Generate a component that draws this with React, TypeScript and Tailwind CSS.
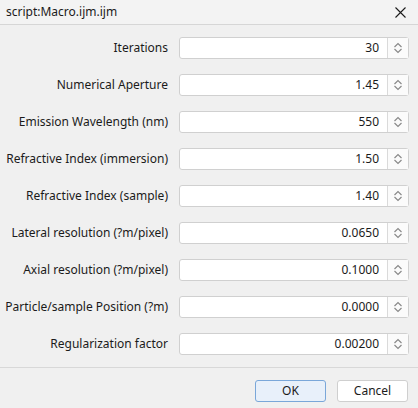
const rows: [string, string][] = [
  ['Iterations', '30'],
  ['Numerical Aperture', '1.45'],
  ['Emission Wavelength (nm)', '550'],
  ['Refractive Index (immersion)', '1.50'],
  ['Refractive Index (sample)', '1.40'],
  ['Lateral resolution (?m/pixel)', '0.0650'],
  ['Axial resolution (?m/pixel)', '0.1000'],
  ['Particle/sample Position (?m)', '0.0000'],
  ['Regularization factor', '0.00200'],
];

function Spinner() {
  return (
    <svg width="12" height="14" viewBox="0 0 12 14" fill="none" stroke="#8a8a8a" strokeWidth="1.2">
      <path d="M2.5 6 L6 2.5 L9.5 6" />
      <path d="M2.5 8 L6 11.5 L9.5 8" />
    </svg>
  );
}

export default function App() {
  return (
    <div className="flex h-[408px] w-[418px] flex-col bg-[#f0f0f0] text-[12px] text-[#1b1b1b]" style={{ fontFamily: '"Segoe UI", "Noto Sans", sans-serif' }}>
      <div className="flex h-[25px] items-center justify-between border-b border-[#d6d6d6] bg-[#f3f3f3] pl-[6px] pr-[12px]">
        <span className="text-[12px]">script:Macro.ijm.ijm</span>
        <svg width="11" height="11" viewBox="0 0 11 11" stroke="#1b1b1b" strokeWidth="1.1">
          <path d="M0.5 0.5 L10.5 10.5 M10.5 0.5 L0.5 10.5" />
        </svg>
      </div>
      <div className="flex flex-col gap-[15px] pb-[12px] pt-[12px]">
        {rows.map(([label, value]) => (
          <div key={label} className="flex h-[22px] items-center">
            <div className="w-[168px] text-right">{label}</div>
            <div className="ml-[11px] flex h-[22px] w-[230px] rounded-[3px] border border-[#d0d0d0] bg-white">
              <div className="flex flex-1 items-center justify-end pr-[8px]">{value}</div>
              <div className="flex w-[21px] items-center justify-center border-l border-[#dadada] bg-[#fbfbfb]">
                <Spinner />
              </div>
            </div>
          </div>
        ))}
      </div>
      <div className="flex flex-1 justify-end gap-[11px] border-t border-[#d8d8d8] pr-[10px] pt-[12px]">
        <button className="h-[22px] w-[71px] rounded-[3px] border border-[#7aa7d9] bg-[#e8f0fa]">OK</button>
        <button className="h-[22px] w-[71px] rounded-[3px] border border-[#cfcfcf] bg-white">Cancel</button>
      </div>
    </div>
  );
}
